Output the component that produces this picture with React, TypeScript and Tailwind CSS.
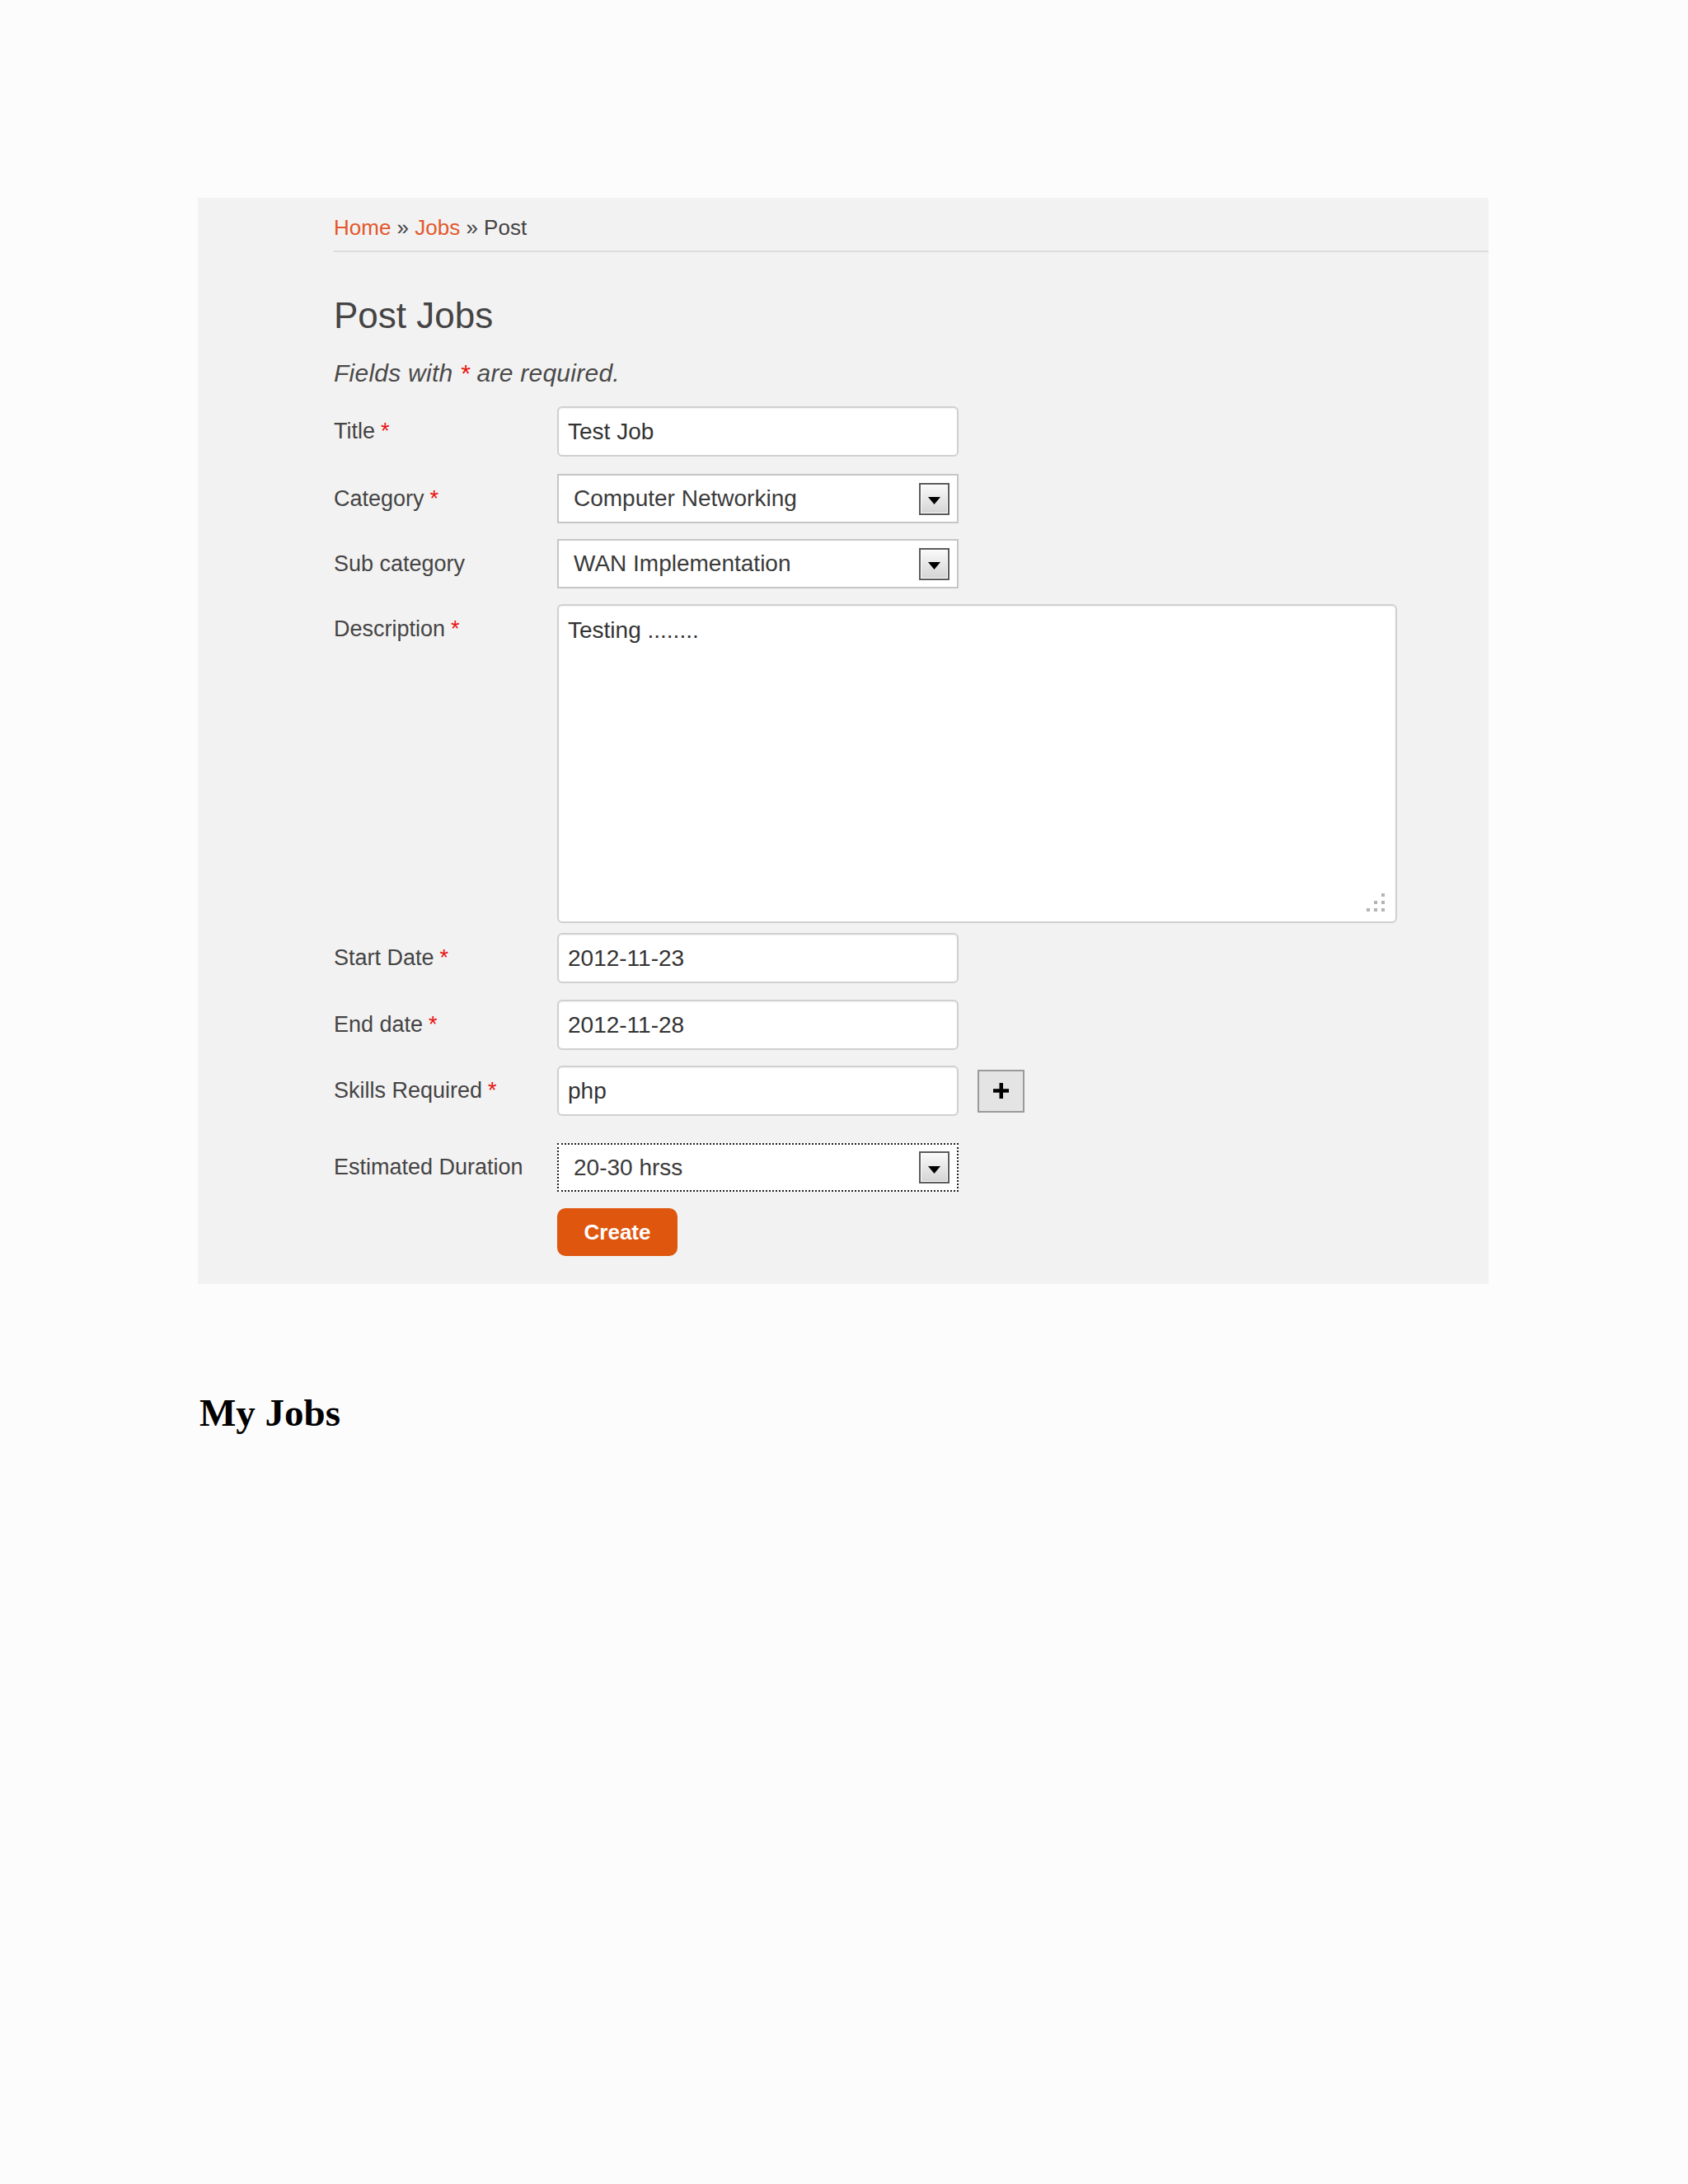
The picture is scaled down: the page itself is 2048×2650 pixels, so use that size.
import React from 'react';

function Req() {
  return <span className="ml-[7px] text-[#e8140f]">*</span>;
}

function Arrow() {
  return (
    <span className="flex h-[39px] w-[37px] items-center justify-center border-2 border-[#5b5b5b] bg-linear-to-b from-[#fafafa] to-[#d4d4d4] shadow-[inset_0_0_0_1px_#ffffff]">
      <svg width="15" height="9" viewBox="0 0 15 9" className="mt-[5px]">
        <path d="M0 0h15L7.5 9z" fill="#000" />
      </svg>
    </span>
  );
}

const labelCls = 'flex w-[271px] shrink-0 items-center text-[27px] text-[#444]';
const inputCls =
  'h-[61px] w-[487px] rounded-[6px] border-2 border-[#d0d0d0] bg-white px-[11px] text-[28px] text-[#333] shadow-[inset_0_1px_2px_rgba(0,0,0,0.06)] outline-none';

function Select({ value, focused }: { value: string; focused?: boolean }) {
  return (
    <div
      className={
        'flex w-[487px] items-center justify-between bg-white pl-[18px] pr-[9px] text-[28px] text-[#3a3a3a] ' +
        (focused ? 'h-[59px] border-2 border-dotted border-[#222]' : 'h-[60px] border-2 border-[#c6c6c6]')
      }
    >
      <span>{value}</span>
      <Arrow />
    </div>
  );
}

export default function App() {
  return (
    <div className="min-h-screen bg-[#fdfcfc] pl-[240px] pt-[240px] font-['Liberation_Sans',Arial,sans-serif]">
      <div className="w-[1566px] bg-[#f3f2f2] pb-[34px] pl-[165px]">
        {/* breadcrumb */}
        <div className="border-b-2 border-[#dddcdc] pb-[13px] pt-[21px] text-[26px] leading-[30px] text-[#444]">
          <a className="text-[#e2582c]">Home</a> » <a className="text-[#e2582c]">Jobs</a> » Post
        </div>

        <h1 className="mt-[55px] text-[44px] leading-[44px] text-[#444]">Post Jobs</h1>
        <p className="mt-[30px] text-[30px] italic leading-[36px] tracking-[0.25px] text-[#4a4a4a]">
          Fields with <span className="text-[#e8140f]">*</span> are required.
        </p>

        <form className="mt-[22px]">
          <div className="flex">
            <label className={labelCls + ' h-[61px]'}>
              <span>Title<Req /></span>
            </label>
            <input className={inputCls} defaultValue="Test Job" readOnly />
          </div>

          <div className="mt-[21px] flex">
            <label className={labelCls + ' h-[60px]'}>
              <span>Category<Req /></span>
            </label>
            <Select value="Computer Networking" />
          </div>

          <div className="mt-[19px] flex">
            <label className={labelCls + ' h-[60px]'}>Sub category</label>
            <Select value="WAN Implementation" />
          </div>

          <div className="mt-[19px] flex items-start">
            <label className={labelCls + ' h-[61px]'}>
              <span>Description<Req /></span>
            </label>
            <div className="relative">
              <textarea
                className="block h-[387px] w-[1019px] resize-none rounded-[6px] border-2 border-[#d0d0d0] bg-white px-[11px] pt-[13px] text-[28px] leading-[34px] text-[#333] shadow-[inset_0_1px_2px_rgba(0,0,0,0.06)] outline-none"
                defaultValue="Testing ........"
                readOnly
              />
              <svg width="22" height="22" viewBox="0 0 22 22" className="absolute bottom-[14px] right-[15px]">
                <rect x="18" y="0" width="4" height="4" fill="#b4b4b4" />
                <rect x="9" y="9" width="4" height="4" fill="#b4b4b4" />
                <rect x="18" y="9" width="4" height="4" fill="#b4b4b4" />
                <rect x="0" y="18" width="4" height="4" fill="#b4b4b4" />
                <rect x="9" y="18" width="4" height="4" fill="#b4b4b4" />
                <rect x="18" y="18" width="4" height="4" fill="#b4b4b4" />
              </svg>
            </div>
          </div>

          <div className="mt-[12px] flex">
            <label className={labelCls + ' h-[61px]'}>
              <span>Start Date<Req /></span>
            </label>
            <input className={inputCls} defaultValue="2012-11-23" readOnly />
          </div>

          <div className="mt-[20px] flex">
            <label className={labelCls + ' h-[61px]'}>
              <span>End date<Req /></span>
            </label>
            <input className={inputCls} defaultValue="2012-11-28" readOnly />
          </div>

          <div className="mt-[19px] flex items-center">
            <label className={labelCls + ' h-[61px]'}>
              <span>Skills Required<Req /></span>
            </label>
            <input className={inputCls} defaultValue="php" readOnly />
            <button
              type="button"
              className="ml-[23px] flex h-[52px] w-[57px] items-center justify-center border-2 border-[#9a9a9a] bg-[#e4e4e4]"
            >
              <svg width="19" height="19" viewBox="0 0 19 19">
                <rect x="7.5" y="0" width="4.5" height="19" fill="#000" />
                <rect x="0" y="7.2" width="19" height="4.5" fill="#000" />
              </svg>
            </button>
          </div>

          <div className="mt-[33px] flex">
            <label className={labelCls + ' h-[59px]'}>Estimated Duration</label>
            <Select value="20-30 hrss" focused />
          </div>

          <div className="mt-[20px] pl-[271px]">
            <button
              type="button"
              className="h-[58px] w-[146px] rounded-[10px] bg-[#df560f] text-[26px] font-bold text-white"
            >
              Create
            </button>
          </div>
        </form>
      </div>

      <h2 className="ml-[2px] mt-[133px] font-['Liberation_Serif','Times_New_Roman',serif] text-[47px] font-bold leading-[47px] text-black">
        My Jobs
      </h2>
    </div>
  );
}
